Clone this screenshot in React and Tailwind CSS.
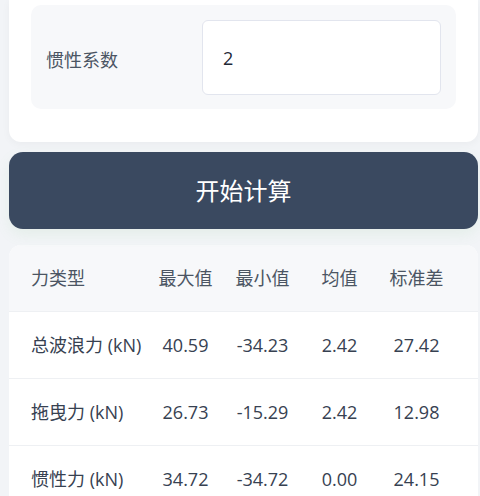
const rows = [
  { name: '总波浪力 (kN)', max: '40.59', min: '-34.23', mean: '2.42', std: '27.42' },
  { name: '拖曳力 (kN)', max: '26.73', min: '-15.29', mean: '2.42', std: '12.98' },
  { name: '惯性力 (kN)', max: '34.72', min: '-34.72', mean: '0.00', std: '24.15' },
]

const font = { fontFamily: '"Segoe UI", "Open Sans", "Noto Sans CJK SC", sans-serif' }

export default function App() {
  return (
    <div className="min-h-[496px] bg-[#f2f4f7] pl-[9px] pr-[2px] text-[#374151]" style={font}>
      {/* params card (scrolled, top cut off) */}
      <div className="bg-white rounded-b-[12px] px-[22px] pt-[5px] pb-[33px] shadow-[0_2px_8px_rgba(0,0,0,0.04)]">
        <div className="bg-[#f7f8fa] rounded-[10px] flex items-center pl-[15px] pr-[15px] pt-[15px] pb-[14px]">
          <label className="w-[156px] shrink-0 pt-[5px] text-[18px] text-[#4b5563]">惯性系数</label>
          <input
            type="number"
            defaultValue="2"
            className="min-w-0 flex-1 h-[75px] bg-white border border-[#e2e5ee] rounded-[6px] px-[20px] text-[18px] text-[#1f2937] outline-none"
          />
        </div>
      </div>

      <button className="mt-[10px] w-full h-[77px] bg-[#3a4960] rounded-[14px] text-white text-[24px] shadow-[0_6px_14px_rgba(120,200,120,0.10)]">
        开始计算
      </button>

      <div className="mt-[16px] bg-white rounded-t-[12px] overflow-hidden">
        <div className="grid grid-cols-[116px_77px_77px_77px_77px] pl-[22px] pr-[23px] h-[67px] items-center bg-[#f7f8fa] border-b border-[#eef0f3] text-[18px] text-[#4b5563]">
          <div>力类型</div>
          <div className="text-center">最大值</div>
          <div className="text-center">最小值</div>
          <div className="text-center">均值</div>
          <div className="text-center">标准差</div>
        </div>
        {rows.map((r) => (
          <div
            key={r.name}
            className="grid grid-cols-[116px_77px_77px_77px_77px] pl-[22px] pr-[23px] h-[67px] items-center border-b border-[#eef0f3] text-[18px] text-[#374151]"
          >
            <div className="whitespace-nowrap">{r.name}</div>
            <div className="text-center">{r.max}</div>
            <div className="text-center">{r.min}</div>
            <div className="text-center">{r.mean}</div>
            <div className="text-center">{r.std}</div>
          </div>
        ))}
      </div>
    </div>
  )
}
